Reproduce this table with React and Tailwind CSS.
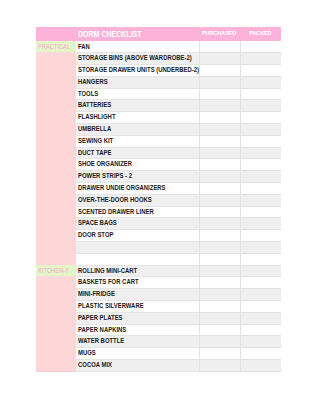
import React from "react";

const practical = [
  "Fan",
  "Storage bins (above wardrobe-2)",
  "Storage drawer units (underbed-2)",
  "Hangers",
  "Tools",
  "Batteries",
  "Flashlight",
  "Umbrella",
  "Sewing kit",
  "Duct tape",
  "Shoe organizer",
  "Power strips - 2",
  "Drawer undie organizers",
  "Over-the-door hooks",
  "Scented drawer liner",
  "Space bags",
  "Door stop",
  "",
  "",
];

const kitchen = [
  "Rolling mini-cart",
  "Baskets for cart",
  "Mini-fridge",
  "Plastic silverware",
  "Paper plates",
  "Paper napkins",
  "Water bottle",
  "Mugs",
  "Cocoa mix",
];

const rows = [
  ...practical.map((item, i) => ({ item, label: i === 0 ? "Practical" : "" })),
  ...kitchen.map((item, i) => ({ item, label: i === 0 ? "Kitchen-y" : "" })),
];

export default function App() {
  return (
    <div className="w-[309px] h-[400px] bg-white pt-[27px] pl-[36px] font-['Liberation_Sans',sans-serif]">
      <div className="w-[245px]">
        {/* header */}
        <div className="grid grid-cols-[40px_123px_41px_41px] h-[13.5px] bg-[#fdb3d9] text-white uppercase font-bold">
          <div />
          <div className="pl-[2px] text-[9px] leading-[14px] whitespace-nowrap">
            <span className="inline-block origin-left scale-x-[0.78]">Dorm Checklist</span>
          </div>
          <div className="flex justify-center text-[6px] leading-[13px] whitespace-nowrap">
            <span className="inline-block scale-x-[0.9]">Purchased</span>
          </div>
          <div className="flex justify-center text-[6px] leading-[13px] whitespace-nowrap">
            <span className="inline-block scale-x-[0.9]">Packed</span>
          </div>
        </div>

        {rows.map((r, i) => (
          <div
            key={i}
            className={`grid grid-cols-[40px_123px_41px_41px] h-[11.8px] uppercase ${
              i % 2 === 1 ? "bg-[#efefef]" : "bg-white"
            }`}
          >
            {r.label ? (
              <div className="bg-[#e3f6c8] text-[#f7a3c9] text-[6.5px] leading-[11.8px] pl-[2px] whitespace-nowrap">
                <span className="inline-block origin-left scale-x-[0.88]">{r.label}</span>
              </div>
            ) : (
              <div className="bg-[#fdd7d7] border-b border-[#fbcdcd]" />
            )}
            <div className="pl-[2px] text-[7.5px] font-bold leading-[11.8px] text-[#1a1a1a] whitespace-nowrap border-b border-[#e4e4e4]">
              <span className="inline-block origin-left scale-x-[0.79]">{r.item}</span>
            </div>
            <div className="border-l border-b border-[#e2e2e2]" />
            <div className="border-l border-b border-[#e2e2e2]" />
          </div>
        ))}
      </div>
    </div>
  );
}
